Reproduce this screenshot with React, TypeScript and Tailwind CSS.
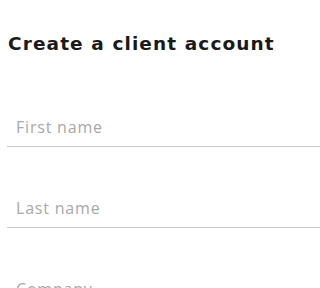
export default function App() {
  return (
    <div className="h-[288px] overflow-hidden bg-white pl-[8px] pt-[33px] font-['Open_Sans',sans-serif]">
      <h1 className="font-['DejaVu_Sans',sans-serif] text-[18.5px] leading-[22px] font-bold tracking-[1.1px] text-[#1a1a1a]">
        Create a client account
      </h1>
      <form className="mt-[52px] flex flex-col gap-[41px] -ml-px">
        {['First name', 'Last name', 'Company'].map((label) => (
          <input
            key={label}
            type="text"
            placeholder={label}
            className="w-full h-[40px] shrink-0 border-b border-[#cccccc] bg-transparent pl-[9px] pt-[1px] pb-0 text-[16px] tracking-[0.8px] text-[#333] placeholder:text-[#a8a8a8] outline-none"
          />
        ))}
      </form>
    </div>
  );
}
